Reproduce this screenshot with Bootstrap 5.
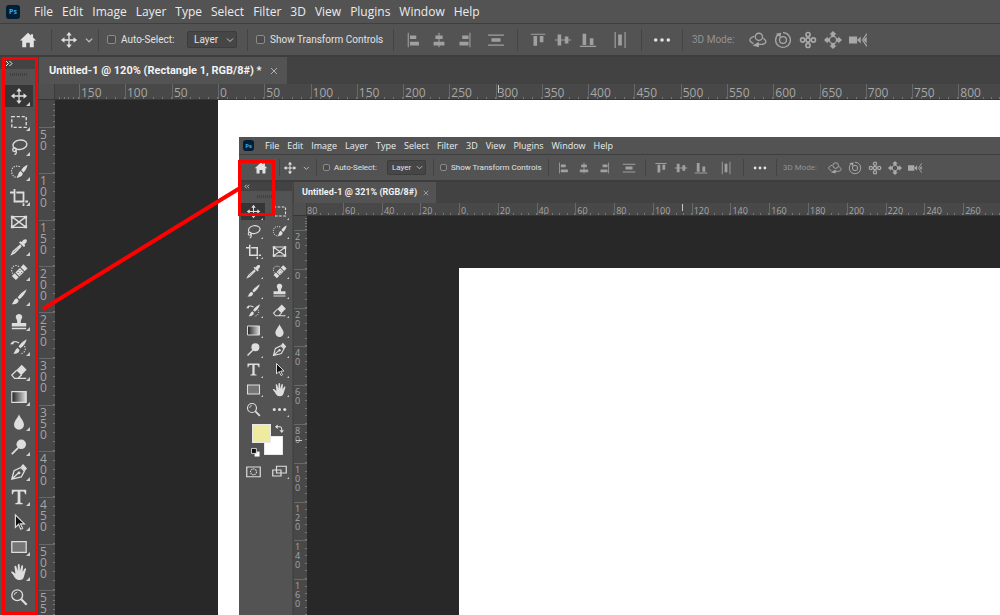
<!DOCTYPE html>
<html lang="en">
<head>
<meta charset="utf-8">
<meta name="viewport" content="width=device-width, initial-scale=1">
<title>Untitled-1 @ 120%</title>
<link rel="stylesheet" href="https://cdn.jsdelivr.net/npm/bootstrap@5.3.0/dist/css/bootstrap.min.css">
<style>
body{font-family:"Open Sans","Noto Sans",sans-serif;color:#e2e2e2;background:#424242;line-height:1}
svg{display:block;flex:none}
/* shared editor chrome; .inner is the smaller nested window */
.editor{
  --menu-h:24px;--menu-f:12px;--menu-gap:9px;--menu-start:14px;--menu-pad:6px;--logo:14px;--logo-f:7px;
  --opt-h:33px;--opt-f:10px;--opt-cols:51px 47px 149px 146px 124px 124px 41px 1fr;--sep-h:22px;
  --ico:18px;--slot:25px;--cb:9px;
  --tab-h:27px;--tab-f:11px;--rule:16px;--rule-f:12px;--rule-lh:11px;--side:38px;
}
.inner{
  --menu-h:18px;--menu-f:9px;--menu-gap:8px;--menu-start:11px;--menu-pad:4px;--logo:11px;--logo-f:6px;
  --opt-h:27px;--opt-f:8px;--opt-cols:40px 37px 117px 115px 97px 98px 33px 1fr;--sep-h:17px;
  --ico:14px;--slot:20px;--cb:7px;
  --tab-h:21px;--tab-f:9px;--rule:13px;--rule-f:9px;--rule-lh:9px;--side:54px;
  background:#424242;
}
.menubar{height:var(--menu-h);background:#535353;border-bottom:1px solid #3f3f3f;padding-left:var(--menu-pad);flex:none}
.menubar a{color:#ececec;text-decoration:none;font-size:var(--menu-f);line-height:16px;white-space:nowrap}
.menubar nav{gap:var(--menu-gap);margin-left:var(--menu-start)}
.logo{width:var(--logo);height:var(--logo);background:#001e36;color:#31a8ff;font-size:var(--logo-f);font-weight:700;border-radius:3px}
.optbar,.kind,.doctab{font-family:Roboto,"Open Sans",sans-serif}
.optbar{display:grid;grid-template-columns:var(--opt-cols);align-items:center;height:var(--opt-h);background:#535353;border-bottom:2px solid #3d3d3d;font-size:var(--opt-f);flex:none;white-space:nowrap}
.optgroup{display:flex;align-items:center;height:var(--sep-h);border-left:1px solid #444}
.optgroup:first-child{border-left:0}
.iconbtn{border:0;padding:0;background:none;color:inherit;display:flex;align-items:center;justify-content:center;width:var(--slot);height:var(--slot);flex:none}
.iconbtn svg{width:var(--ico);height:var(--ico)}
.alignset{padding-left:7px;color:#a0a0a0}
.alignset .far{margin-left:7px}
.modes{padding-left:9px;color:#929292}
.modes span{width:53px}
.modes .iconbtn{color:#a8a8a8}
.pick{padding-left:8px}
.pick label{display:flex;align-items:center;gap:5px;line-height:14px;flex:none}
.pick .kindlabel{width:66px}
.tick{appearance:none;margin:0;flex:none;width:var(--cb);height:var(--cb);border:1px solid #8b8b8b;border-radius:2px;background:#4b4b4b}
.kind{appearance:none;width:50px;height:17px;border:1px solid #3c3c3c;border-radius:2px;color:#e2e2e2;font-size:var(--opt-f);line-height:14px;padding:0 0 0 6px;margin-left:14px;
 background:#464646 url("data:image/svg+xml,%3Csvg xmlns='http://www.w3.org/2000/svg' viewBox='0 0 8 8'%3E%3Cpath d='M1 2.5l3 3 3-3' fill='none' stroke='%23ccc'/%3E%3C/svg%3E") no-repeat right 2px center/8px 8px}
.inner .alignset{padding-left:5px}
.inner .alignset .far{margin-left:5px}
.inner .modes{padding-left:6px}
.inner .modes span{width:42px}
.inner .pick{padding-left:6px}
.inner .pick label{gap:4px}
.inner .pick .kindlabel{width:53px}
.inner .kind{width:39px;height:15px;line-height:12px;padding-left:4px;margin-left:11px;background-size:7px 7px}
.side{width:var(--side);background:#535353;flex:none;border-right:1px solid #484848}
.sidehead{height:12px;background:#434343;padding-left:5px;flex:none}
.grip{height:15px;flex:none}
.grip i{width:18px;height:3px;background:repeating-linear-gradient(90deg,#404040 0 1px,transparent 1px 2px)}
.tool{position:relative;border:0;padding:0;background:none;color:#dedede;display:flex;align-items:center;justify-content:center;width:29px;height:25px}
.tool svg{width:18px;height:18px}
.tool.more::after{content:"";position:absolute;right:3px;bottom:3px;border:2px solid transparent;border-right-color:#cfcfcf;border-bottom-color:#cfcfcf}
.tool.on{background:#363636 content-box;padding:1px 0 2px}
.strip{padding-left:4px;flex:1}
.toolgrid{display:grid;grid-template-columns:26px 26px;grid-auto-rows:1fr;height:217px;padding-left:2px;flex:none}
.toolgrid .tool,.viewrow .tool{width:24px;height:100%}
.toolgrid svg,.viewrow svg{width:15px;height:15px}
.inner .tool.more::after{right:2px;bottom:2px;border-width:1px}
.inner .sidehead{height:9px}
.inner .grip{height:11px}
.viewrow{display:grid;grid-template-columns:26px 26px;height:20px;padding-left:2px}
.tabs{height:var(--tab-h);background:#424242;padding-left:1px;flex:none}
.doctab{background:#535353;font-size:var(--tab-f);font-weight:700;color:#f2f2f2;padding:0 9px 0 10px;gap:8px;white-space:nowrap}
.doctab button{border:0;background:none;padding:0;color:#b0b0b0}
.inner .doctab{padding:0 7px 0 8px;gap:6px}
.hruler{height:var(--rule);font-size:var(--rule-f);line-height:calc(var(--rule) + 2px);color:#a6a6a6;background:#484848;border-bottom:1px solid #363636;flex:none}
.corner{width:var(--rule);margin-left:1px;border-right:1px solid #3c3c3c;background:#505050;flex:none}
.hscale{display:grid;grid-template-rows:100%;flex:1;min-width:0}
.hscale span{border-left:1px solid #686868;padding-left:1px;min-width:0;white-space:nowrap;background:repeating-linear-gradient(90deg,transparent 0 calc(20% - 1px),#777 calc(20% - 1px) 20%) 0 100%/100% 2px no-repeat}
.editor .cut{border:0;padding:0}
.vruler{width:var(--rule);margin-left:1px;background:#484848;color:#a6a6a6;font-size:var(--rule-f);line-height:var(--rule-lh);display:grid;flex:none}
.vruler span{border-top:1px solid #686868;padding:1px 0 0 1px;min-height:0;background:repeating-linear-gradient(180deg,transparent 0 calc(20% - 1px),#777 calc(20% - 1px) 20%) 100% 0/2px 100% no-repeat}
.vruler b{display:block;width:1ch;font-weight:400;word-break:break-all}
.x-main{grid-template-columns:24px 46px 47px 46px repeat(16,minmax(0,1fr)) minmax(0,.9fr)}
.y-main{grid-template-rows:27px repeat(10,minmax(0,1fr)) minmax(0,.54fr)}
.x-sub{grid-template-columns:36px 39px 38px 39px repeat(13,minmax(0,1fr)) minmax(0,.95fr)}
.y-sub{grid-template-rows:14px repeat(9,minmax(0,1fr)) minmax(0,.92fr)}
.canvas{background:#282828;flex:1;min-width:0;min-height:0}
.page-main{margin-left:163px;padding:37px 0 0 21px;background:#fff}
.page-sub{margin:52px 0 0 152px;background:#fff}
.swatches{height:42px;position:relative;flex:none}
.swatches input{position:absolute;appearance:none;width:19px;height:19px;padding:0;border:1px solid #e8e8e8}
.fore{left:13px;top:5px;background:#efeb9e;z-index:1}
.back{left:25px;top:17px;background:#fff}
.swatches svg{position:absolute;width:9px;height:9px}
.swapper{left:36px;top:5px}.resetter{left:12px;top:29px}
.notes{position:absolute;left:0;top:0;width:100%;height:100%;pointer-events:none;z-index:5}
</style>
</head>
<body>
<svg width="0" height="0" class="position-absolute" aria-hidden="true"><defs>
<symbol id="home" viewBox="0 0 20 20"><path fill="currentColor" d="M10 2L1 10.5h2.6V18H8v-5h4v5h4.400V10.500H19L15.600 7.300V3.500h-2.400v1.600z"/></symbol>
<symbol id="move" viewBox="0 0 20 20"><path stroke="currentColor" stroke-width="1.400" d="M10 4v12M4 10h12"/><path fill="currentColor" d="M10 1l3 4H7zM10 19l3-4H7zM1 10l4-3v6zM19 10l-4-3v6z"/></symbol>
<symbol id="chev" viewBox="0 0 20 20"><path fill="none" stroke="#bbb" stroke-width="1.400" d="M5.500 8.500l3.500 3.500 3.500-3.500"/></symbol>
<symbol id="al" viewBox="0 0 20 20"><path fill="currentColor" d="M3 2h1.200v16H3zM5.500 5h7v4h-7zM5.500 12h10v4h-10z"/></symbol>
<symbol id="ac" viewBox="0 0 20 20"><path fill="currentColor" d="M9.400 2h1.200v16H9.400zM6 5h8v4H6zM4 12h12v4H4z"/></symbol>
<symbol id="ar" viewBox="0 0 20 20"><path fill="currentColor" d="M16 2h1.200v16H16zM8 5h7v4H8zM5 12h10v4H5z"/></symbol>
<symbol id="dv" viewBox="0 0 20 20"><path fill="currentColor" d="M1 4h18v1.300H1zM1 15h18v1.300H1zM5 8h10v4H5z"/></symbol>
<symbol id="at" viewBox="0 0 20 20"><path fill="currentColor" d="M2 3h16v1.300H2zM5 5.500h4v11H5zM12 5.500h4v7h-4z"/></symbol>
<symbol id="am" viewBox="0 0 20 20"><path fill="currentColor" d="M1 9.400h18v1.200H1zM4 4h4v12H4zM12 6h4v8h-4z"/></symbol>
<symbol id="ab" viewBox="0 0 20 20"><path fill="currentColor" d="M1 16.500h18v1.300H1zM4 3h4v12.500H4zM12 8h4v7.500h-4z"/></symbol>
<symbol id="dh" viewBox="0 0 20 20"><path fill="currentColor" d="M4 1h1.300v18H4zM15 1h1.300v18H15zM8 4h4v12H8z"/></symbol>
<symbol id="dots" viewBox="0 0 20 20"><g fill="currentColor"><circle cx="3" cy="10" r="2"/><circle cx="10" cy="10" r="2"/><circle cx="17" cy="10" r="2"/></g></symbol>
<symbol id="orbit" viewBox="0 0 20 20"><g fill="none" stroke="currentColor" stroke-width="1.400"><circle cx="11" cy="6.500" r="4"/><path d="M6 6C-1 8 0 12 5 14M16 8c5 4 3 8-6 6.500"/></g><path fill="currentColor" d="M11 12v6l-7-2z"/></symbol>
<symbol id="roll" viewBox="0 0 20 20"><g fill="none" stroke="currentColor" stroke-width="1.400"><circle cx="10" cy="10" r="3.800"/><path d="M5 3.500a8.200 8.200 0 1 0 5-1.700"/></g><path fill="currentColor" d="M2 3l6-1-1 5z"/></symbol>
<symbol id="pan3" viewBox="0 0 20 20"><g fill="none" stroke="currentColor" stroke-width="1.800"><circle cx="10" cy="4" r="2.300"/><circle cx="10" cy="16" r="2.300"/><circle cx="4" cy="10" r="2.300"/><circle cx="16" cy="10" r="2.300"/><circle cx="10" cy="10" r="2.300"/></g></symbol>
<symbol id="slide" viewBox="0 0 20 20"><circle cx="10" cy="10" r="4" fill="none" stroke="currentColor" stroke-width="1.400"/><path fill="currentColor" d="M10 0l4 4h-2v2H8V4H6zM10 20l4-4h-2v-2H8v2H6zM0 10l4-4v2h2v4H4v2zM20 10l-4-4v2h-2v4h2v2z"/></symbol>
<symbol id="cam" viewBox="0 0 20 20"><path fill="currentColor" d="M0 6h9v8H0zM9 10l4-4v8z"/><path fill="none" stroke="currentColor" stroke-width="1.300" d="M20 3l-5 7 5 7M17 10l2-2v4z"/></symbol>
<symbol id="marq" viewBox="0 0 20 20"><path fill="none" stroke="currentColor" stroke-width="1.500" stroke-dasharray="3.500 2" d="M2 4h16v12H2z"/></symbol>
<symbol id="lasso" viewBox="0 0 20 20"><g fill="none" stroke="currentColor" stroke-width="1.500"><ellipse cx="11" cy="7.500" rx="7.800" ry="5.200" transform="rotate(-10 11 7.500)"/><circle cx="5" cy="13" r="2"/><path d="M6 14c2 1 1 4-1 4.500"/></g></symbol>
<symbol id="quick" viewBox="0 0 20 20"><path fill="none" stroke="currentColor" stroke-width="1.200" stroke-dasharray="1.500 1.300" d="M11 4C4 2 1 6 2 11s6 6 8 4"/><path fill="currentColor" d="M19.500 2c-3 1-6 4-7 6l2.500 2.500c2-1.500 4-5 4.500-8.500zM11.700 9l2.500 2.500c0 3-3 5-6.700 4 2-1 1-4.500 4.200-6.500z"/></symbol>
<symbol id="crop" viewBox="0 0 20 20"><path fill="none" stroke="currentColor" stroke-width="2" d="M5 1v14h11M0 5h4M7 5h8v10M15 17v3M17 15h3"/></symbol>
<symbol id="frame" viewBox="0 0 20 20"><path fill="none" stroke="currentColor" stroke-width="1.500" d="M2 4h16v12H2zM2 4l16 12M18 4L2 16"/><path fill="currentColor" d="M1 3h3v3H1zM16 3h3v3h-3zM1 14h3v3H1zM16 14h3v3h-3z"/></symbol>
<symbol id="drop" viewBox="0 0 20 20"><path fill="none" stroke="currentColor" stroke-width="1.500" d="M12 7.500L3.500 15 2 18l3-1.500L12.500 9"/><path fill="currentColor" d="M10 5l1.500-1.500 1.500 1C15 1 18 1 18.500 2S19 5 16 7l1 1.500-1.500 1.500z"/></symbol>
<symbol id="heal" viewBox="0 0 20 20"><path fill="none" stroke="currentColor" stroke-width="1.200" stroke-dasharray="1.500 1.300" d="M10 4C6 1 1 4 2 9c.5 2 1 3 2 3"/><path fill="currentColor" d="M15 1.500l4.500 4.500-3.200 3.200-4.500-4.500zM11 5.500l4.500 4.500-5 5L6 10.500zM5.200 11.300l4.500 4.500-3.200 3.200L2 14.500z"/><path fill="#535353" d="M10.500 8h1v1h-1zM8.500 10h1v1h-1zM12.500 10h1v1h-1zM10.500 12h1v1h-1z"/></symbol>
<symbol id="brush" viewBox="0 0 20 20"><path fill="currentColor" d="M18.500 1.500C14 4 10 8 8.500 10.500l2 2C14 10 17.500 5.500 18.500 1.500zM7.500 11.500l2 2c0 3.500-3.500 5-7.500 4.500 2-1.500 2-5.500 5.500-6.500z"/></symbol>
<symbol id="stamp" viewBox="0 0 20 20"><path fill="currentColor" d="M10 1a3.500 3.500 0 0 1 3 5.500c-1 1.500-1 2.500-1 4.500h6v4H2v-4h6c0-2 0-3-1-4.500A3.500 3.500 0 0 1 10 1zM2 16.500h16V18H2z"/></symbol>
<symbol id="hist" viewBox="0 0 20 20"><path fill="currentColor" d="M18.500 1.500C14 4 11 7 9.500 9.500l2 2C15 9 18 5.500 18.500 1.500zM8.500 11l2 2c0 3.500-3.500 5-7 4.500 2-1.500 2-5 5-6.500zM0 7l4-4v4z"/><path fill="none" stroke="currentColor" stroke-width="1.400" d="M2 5.500C5 3 8 4 10 5.500"/><path fill="none" stroke="currentColor" stroke-width="1.200" stroke-dasharray="1.500 1.500" d="M16 9c3 4-1 9-5 8.500"/></symbol>
<symbol id="erase" viewBox="0 0 20 20"><path fill="currentColor" d="M13 2l5.500 5.500-6 6L7 8z"/><path fill="none" stroke="currentColor" stroke-width="1.400" d="M7.500 8L2 13.500 5 17h4l4-4M9 17h9"/></symbol>
<linearGradient id="fade"><stop offset="0" stop-color="#222"/><stop offset="1" stop-color="#ddd"/></linearGradient>
<symbol id="grad" viewBox="0 0 20 20"><path fill="url(#fade)" stroke="currentColor" stroke-width="1.300" d="M2 4h16v12H2z"/></symbol>
<symbol id="blur" viewBox="0 0 20 20"><path fill="currentColor" d="M10 1.500c1 3.500 5.500 7.500 5.500 11.500a5.500 5.500 0 0 1-11 0c0-4 4.500-8 5.500-11.500z"/></symbol>
<symbol id="dodge" viewBox="0 0 20 20"><circle cx="12.500" cy="7" r="5.300" fill="currentColor"/><path stroke="currentColor" stroke-width="2" d="M9 11l-7 7"/></symbol>
<symbol id="pen" viewBox="0 0 20 20"><path fill="none" stroke="currentColor" stroke-width="1.500" d="M2 18l2.500-9.500L12 5l4 4-3.500 6.500zM2.500 17.500l6.500-6"/><circle cx="10" cy="11" r="1.600" fill="currentColor"/><path fill="currentColor" d="M12 4l2.500-3L19 6l-2.500 3z"/></symbol>
<symbol id="type" viewBox="0 0 20 20"><path fill="currentColor" d="M2 2h16v5h-1.300C16.300 4.500 15.500 4 13.500 4h-2v11c0 1.300.6 1.700 2.500 1.700V18H6v-1.300c1.900 0 2.500-.4 2.500-1.700V4h-2c-2 0-2.800.5-3.200 3H2z"/></symbol>
<symbol id="arrow" viewBox="0 0 20 20"><path fill="#111" stroke="currentColor" stroke-width="1.300" d="M6 2v14l3.500-3.500L12 18l2-1-2.500-5H16z"/></symbol>
<symbol id="rect" viewBox="0 0 20 20"><path fill="#757575" stroke="currentColor" stroke-width="1.400" d="M2 4h16v12H2z"/></symbol>
<symbol id="hand" viewBox="0 0 20 20"><path fill="currentColor" d="M1 10c1-1 2.300-.5 3 .3L6 12 5 4.500C4.800 3 6.500 2.500 7 4l1.500 5L8.700 2.500c0-1.700 2-1.700 2.100 0L11 9l1.500-5.500c.5-1.500 2.200-1 2 .5L14 10l2-3.500c.8-1.300 2.300-.5 1.800.8L15.500 15c-.5 2-1.500 4-5 4-4 0-5.500-3-6.500-5z"/></symbol>
<symbol id="zoom" viewBox="0 0 20 20"><circle cx="8" cy="8" r="6" fill="none" stroke="currentColor" stroke-width="1.500"/><path fill="none" stroke="currentColor" d="M4.800 8A3.200 3.200 0 0 1 8 4.800"/><path stroke="currentColor" stroke-width="2.400" d="M12.500 12.500l6 6"/></symbol>
<symbol id="mask" viewBox="0 0 20 20"><path fill="none" stroke="currentColor" stroke-width="1.600" d="M1 4h18v13H1z"/><circle cx="10" cy="10.500" r="4" fill="none" stroke="currentColor" stroke-width="1.400" stroke-dasharray="2 1"/></symbol>
<symbol id="screen" viewBox="0 0 20 20"><path fill="#535353" stroke="currentColor" stroke-width="1.600" d="M1 8h11v8H1zM6 3h13v9H6z"/></symbol>
<symbol id="swap" viewBox="0 0 20 20"><path fill="none" stroke="currentColor" stroke-width="2.500" d="M4 6h7c3 0 4 1 4 8"/><path fill="currentColor" d="M0 6l6-5v10zM15 20l-5-6h10z"/></symbol>
<symbol id="reset" viewBox="0 0 20 20"><path fill="#fff" d="M8 8h11v11H8z"/><path fill="#111" stroke="#ddd" stroke-width="2" d="M1 1h11v11H1z"/></symbol>
</defs></svg>

<div class="editor vh-100 d-flex flex-column overflow-hidden position-relative">
  <header class="menubar d-flex align-items-center">
    <span class="logo d-flex align-items-center justify-content-center">Ps</span>
    <nav class="d-flex"><a href="#">File</a><a href="#">Edit</a><a href="#">Image</a><a href="#">Layer</a><a href="#">Type</a><a href="#">Select</a><a href="#">Filter</a><a href="#">3D</a><a href="#">View</a><a href="#">Plugins</a><a href="#">Window</a><a href="#">Help</a></nav>
  </header>
  <div class="optbar">
    <div class="optgroup justify-content-center ps-1"><button class="iconbtn" aria-label="Home"><svg><use href="#home"/></svg></button></div>
    <div class="optgroup ps-1"><button class="iconbtn" aria-label="Move"><svg><use href="#move"/></svg></button><button class="iconbtn w-auto" aria-label="Presets"><svg><use href="#chev"/></svg></button></div>
    <div class="optgroup pick"><label class="kindlabel"><input type="checkbox" class="tick">Auto-Select:</label><select class="kind" aria-label="Auto-select kind"><option>Layer</option></select></div>
    <div class="optgroup pick"><label><input type="checkbox" class="tick">Show Transform Controls</label></div>
    <div class="optgroup alignset"><button class="iconbtn" aria-label="Align left"><svg><use href="#al"/></svg></button><button class="iconbtn" aria-label="Align centers"><svg><use href="#ac"/></svg></button><button class="iconbtn" aria-label="Align right"><svg><use href="#ar"/></svg></button><button class="iconbtn far" aria-label="Distribute vertically"><svg><use href="#dv"/></svg></button></div>
    <div class="optgroup alignset"><button class="iconbtn" aria-label="Align top"><svg><use href="#at"/></svg></button><button class="iconbtn" aria-label="Align middle"><svg><use href="#am"/></svg></button><button class="iconbtn" aria-label="Align bottom"><svg><use href="#ab"/></svg></button><button class="iconbtn far" aria-label="Distribute horizontally"><svg><use href="#dh"/></svg></button></div>
    <div class="optgroup justify-content-center"><button class="iconbtn" aria-label="More"><svg><use href="#dots"/></svg></button></div>
    <div class="optgroup modes"><span>3D Mode:</span><div class="d-flex"><button class="iconbtn" aria-label="Orbit"><svg><use href="#orbit"/></svg></button><button class="iconbtn" aria-label="Roll"><svg><use href="#roll"/></svg></button><button class="iconbtn" aria-label="Pan"><svg><use href="#pan3"/></svg></button><button class="iconbtn" aria-label="Slide"><svg><use href="#slide"/></svg></button><button class="iconbtn" aria-label="Camera"><svg><use href="#cam"/></svg></button></div></div>
  </div>
  <div class="d-flex flex-fill overflow-hidden">
    <aside class="side d-flex flex-column">
      <div class="sidehead d-flex align-items-center"><svg width="8" height="7" viewBox="0 0 8 7"><path fill="none" stroke="#eee" d="M1 1l2.500 2.500L1 6M4.500 1L7 3.500 4.500 6"/></svg></div>
      <div class="grip d-flex justify-content-center pt-1"><i></i></div>
      <div class="strip">
        <button class="tool more on" aria-label="Move"><svg><use href="#move"/></svg></button>
        <button class="tool more" aria-label="Marquee"><svg><use href="#marq"/></svg></button>
        <button class="tool more" aria-label="Lasso"><svg><use href="#lasso"/></svg></button>
        <button class="tool more" aria-label="Quick selection"><svg><use href="#quick"/></svg></button>
        <button class="tool more" aria-label="Crop"><svg><use href="#crop"/></svg></button>
        <button class="tool" aria-label="Frame"><svg><use href="#frame"/></svg></button>
        <button class="tool more" aria-label="Eyedropper"><svg><use href="#drop"/></svg></button>
        <button class="tool more" aria-label="Healing brush"><svg><use href="#heal"/></svg></button>
        <button class="tool more" aria-label="Brush"><svg><use href="#brush"/></svg></button>
        <button class="tool more" aria-label="Clone stamp"><svg><use href="#stamp"/></svg></button>
        <button class="tool more" aria-label="History brush"><svg><use href="#hist"/></svg></button>
        <button class="tool more" aria-label="Eraser"><svg><use href="#erase"/></svg></button>
        <button class="tool more" aria-label="Gradient"><svg><use href="#grad"/></svg></button>
        <button class="tool more" aria-label="Blur"><svg><use href="#blur"/></svg></button>
        <button class="tool more" aria-label="Dodge"><svg><use href="#dodge"/></svg></button>
        <button class="tool more" aria-label="Pen"><svg><use href="#pen"/></svg></button>
        <button class="tool more" aria-label="Type"><svg><use href="#type"/></svg></button>
        <button class="tool more" aria-label="Path selection"><svg><use href="#arrow"/></svg></button>
        <button class="tool more" aria-label="Rectangle"><svg><use href="#rect"/></svg></button>
        <button class="tool more" aria-label="Hand"><svg><use href="#hand"/></svg></button>
        <button class="tool" aria-label="Zoom"><svg><use href="#zoom"/></svg></button>
      </div>
    </aside>
    <main class="d-flex flex-column flex-fill overflow-hidden">
      <div class="tabs d-flex"><div class="doctab d-flex align-items-center">Untitled-1 @ 120% (Rectangle 1, RGB/8#) *<button aria-label="Close"><svg width="8" height="8" viewBox="0 0 8 8"><path stroke="currentColor" d="M1 1l6 6M7 1L1 7"/></svg></button></div></div>
      <div class="hruler d-flex"><div class="corner"></div><div class="hscale x-main"><span class="cut"></span><span>150</span><span>100</span><span>50</span><span>0</span><span>50</span><span>100</span><span>150</span><span>200</span><span>250</span><span>300</span><span>350</span><span>400</span><span>450</span><span>500</span><span>550</span><span>600</span><span>650</span><span>700</span><span>750</span><span>800</span></div></div>
      <div class="d-flex flex-fill overflow-hidden">
        <div class="vruler y-main"><span class="cut"></span><span><b>50</b></span><span><b>100</b></span><span><b>150</b></span><span><b>200</b></span><span><b>250</b></span><span><b>300</b></span><span><b>350</b></span><span><b>400</b></span><span><b>450</b></span><span><b>500</b></span><span><b>55</b></span></div>
        <div class="canvas d-flex">
          <div class="page-main flex-fill d-flex overflow-hidden">
            <section class="editor inner flex-fill d-flex flex-column overflow-hidden">
              <header class="menubar d-flex align-items-center">
                <span class="logo d-flex align-items-center justify-content-center">Ps</span>
                <nav class="d-flex"><a href="#">File</a><a href="#">Edit</a><a href="#">Image</a><a href="#">Layer</a><a href="#">Type</a><a href="#">Select</a><a href="#">Filter</a><a href="#">3D</a><a href="#">View</a><a href="#">Plugins</a><a href="#">Window</a><a href="#">Help</a></nav>
              </header>
              <div class="optbar">
                <div class="optgroup justify-content-center ps-1"><button class="iconbtn" aria-label="Home"><svg><use href="#home"/></svg></button></div>
                <div class="optgroup"><button class="iconbtn" aria-label="Move"><svg><use href="#move"/></svg></button><button class="iconbtn w-auto" aria-label="Presets"><svg><use href="#chev"/></svg></button></div>
                <div class="optgroup pick"><label class="kindlabel"><input type="checkbox" class="tick">Auto-Select:</label><select class="kind" aria-label="Auto-select kind"><option>Layer</option></select></div>
                <div class="optgroup pick"><label><input type="checkbox" class="tick">Show Transform Controls</label></div>
                <div class="optgroup alignset"><button class="iconbtn" aria-label="Align left"><svg><use href="#al"/></svg></button><button class="iconbtn" aria-label="Align centers"><svg><use href="#ac"/></svg></button><button class="iconbtn" aria-label="Align right"><svg><use href="#ar"/></svg></button><button class="iconbtn far" aria-label="Distribute vertically"><svg><use href="#dv"/></svg></button></div>
                <div class="optgroup alignset"><button class="iconbtn" aria-label="Align top"><svg><use href="#at"/></svg></button><button class="iconbtn" aria-label="Align middle"><svg><use href="#am"/></svg></button><button class="iconbtn" aria-label="Align bottom"><svg><use href="#ab"/></svg></button><button class="iconbtn far" aria-label="Distribute horizontally"><svg><use href="#dh"/></svg></button></div>
                <div class="optgroup justify-content-center"><button class="iconbtn" aria-label="More"><svg><use href="#dots"/></svg></button></div>
                <div class="optgroup modes"><span>3D Mode:</span><div class="d-flex"><button class="iconbtn" aria-label="Orbit"><svg><use href="#orbit"/></svg></button><button class="iconbtn" aria-label="Roll"><svg><use href="#roll"/></svg></button><button class="iconbtn" aria-label="Pan"><svg><use href="#pan3"/></svg></button><button class="iconbtn" aria-label="Slide"><svg><use href="#slide"/></svg></button><button class="iconbtn" aria-label="Camera"><svg><use href="#cam"/></svg></button></div></div>
              </div>
              <div class="d-flex flex-fill overflow-hidden">
                <aside class="side d-flex flex-column">
                  <div class="sidehead d-flex align-items-center"><svg width="6" height="5" viewBox="0 0 8 7"><path fill="none" stroke="#eee" d="M3.500 1L1 3.500 3.500 6M7 1L4.500 3.500 7 6"/></svg></div>
                  <div class="grip d-flex justify-content-center pt-1"><i></i></div>
                  <div class="toolgrid">
                    <button class="tool more on" aria-label="Move"><svg><use href="#move"/></svg></button><button class="tool more" aria-label="Marquee"><svg><use href="#marq"/></svg></button>
                    <button class="tool more" aria-label="Lasso"><svg><use href="#lasso"/></svg></button><button class="tool more" aria-label="Quick selection"><svg><use href="#quick"/></svg></button>
                    <button class="tool more" aria-label="Crop"><svg><use href="#crop"/></svg></button><button class="tool" aria-label="Frame"><svg><use href="#frame"/></svg></button>
                    <button class="tool more" aria-label="Eyedropper"><svg><use href="#drop"/></svg></button><button class="tool more" aria-label="Healing brush"><svg><use href="#heal"/></svg></button>
                    <button class="tool more" aria-label="Brush"><svg><use href="#brush"/></svg></button><button class="tool more" aria-label="Clone stamp"><svg><use href="#stamp"/></svg></button>
                    <button class="tool more" aria-label="History brush"><svg><use href="#hist"/></svg></button><button class="tool more" aria-label="Eraser"><svg><use href="#erase"/></svg></button>
                    <button class="tool more" aria-label="Gradient"><svg><use href="#grad"/></svg></button><button class="tool more" aria-label="Blur"><svg><use href="#blur"/></svg></button>
                    <button class="tool more" aria-label="Dodge"><svg><use href="#dodge"/></svg></button><button class="tool more" aria-label="Pen"><svg><use href="#pen"/></svg></button>
                    <button class="tool more" aria-label="Type"><svg><use href="#type"/></svg></button><button class="tool more" aria-label="Path selection"><svg><use href="#arrow"/></svg></button>
                    <button class="tool more" aria-label="Rectangle"><svg><use href="#rect"/></svg></button><button class="tool more" aria-label="Hand"><svg><use href="#hand"/></svg></button>
                    <button class="tool" aria-label="Zoom"><svg><use href="#zoom"/></svg></button><button class="tool more" aria-label="Edit toolbar"><svg><use href="#dots"/></svg></button>
                  </div>
                  <div class="swatches">
                    <input type="button" class="fore" aria-label="Foreground colour"><input type="button" class="back" aria-label="Background colour">
                    <svg class="swapper"><use href="#swap"/></svg><svg class="resetter"><use href="#reset"/></svg>
                  </div>
                  <div class="viewrow"><button class="tool" aria-label="Quick mask"><svg><use href="#mask"/></svg></button><button class="tool more" aria-label="Screen mode"><svg><use href="#screen"/></svg></button></div>
                </aside>
                <div class="d-flex flex-column flex-fill overflow-hidden">
                  <div class="tabs d-flex"><div class="doctab d-flex align-items-center">Untitled-1 @ 321% (RGB/8#)<button aria-label="Close"><svg width="6" height="6" viewBox="0 0 8 8"><path stroke="currentColor" d="M1 1l6 6M7 1L1 7"/></svg></button></div></div>
                  <div class="hruler d-flex"><div class="corner"></div><div class="hscale x-sub"><span class="cut">80</span><span>60</span><span>40</span><span>20</span><span>0</span><span>20</span><span>40</span><span>60</span><span>80</span><span>100</span><span>120</span><span>140</span><span>160</span><span>180</span><span>200</span><span>220</span><span>240</span><span>260</span></div></div>
                  <div class="d-flex flex-fill overflow-hidden">
                    <div class="vruler y-sub"><span class="cut"></span><span><b>20</b></span><span><b>0</b></span><span><b>20</b></span><span><b>40</b></span><span><b>60</b></span><span><b>80</b></span><span><b>100</b></span><span><b>120</b></span><span><b>140</b></span><span><b>160</b></span></div>
                    <div class="canvas d-flex"><div class="page-sub flex-fill"></div></div>
                  </div>
                </div>
              </div>
            </section>
          </div>
        </div>
      </div>
    </main>
  </div>
  <svg class="notes" aria-hidden="true"><path stroke="#c8c8c8" d="M498.500 85v8M682.500 204v7M296 440.500h6"/><g fill="none" stroke="#f00" stroke-width="3"><rect x="3.500" y="58.500" width="33" height="555"/><rect x="239.500" y="161.500" width="34" height="53"/><path stroke-width="4" d="M43 309L240 188"/></g></svg>
</div>
<script src="https://cdn.jsdelivr.net/npm/bootstrap@5.3.0/dist/js/bootstrap.bundle.min.js"></script>
</body>
</html>
